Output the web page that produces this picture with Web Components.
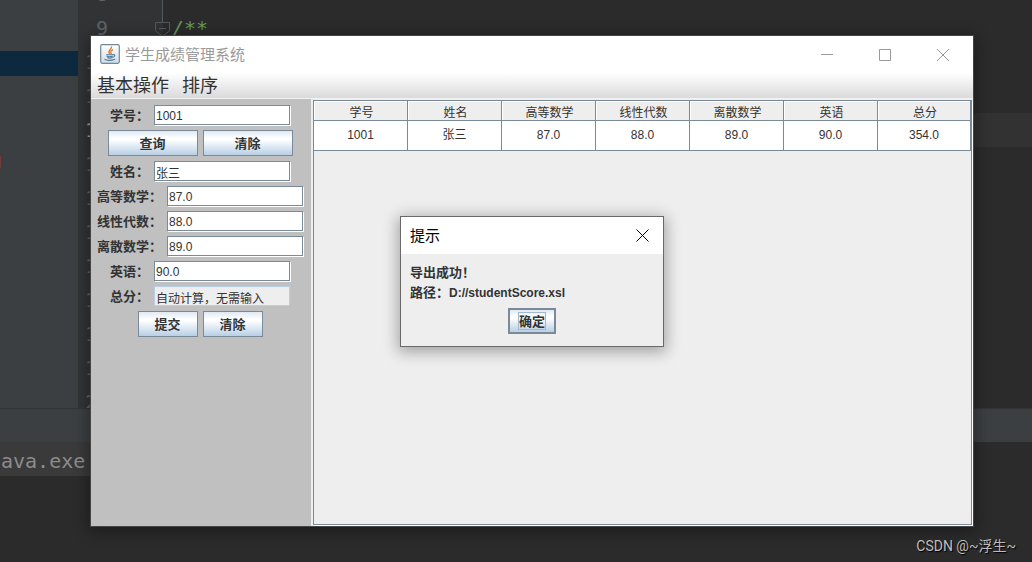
<!DOCTYPE html>
<html lang="zh-CN">
<head>
<meta charset="utf-8">
<meta name="viewport" content="width=device-width, initial-scale=1">
<title>学生成绩管理系统</title>
<style>
  html, body { height: 100%; margin: 0; }
  body {
    overflow: hidden;
    background: #2b2b2b;
    color: #333;
    font: 12px "Liberation Sans", "Noto Sans CJK SC", sans-serif;
    --edge: #7a8a99;
  }
</style>
</head>
<body>
<app-desktop>
  <ide-backdrop slot="backdrop"></ide-backdrop>
  <app-window slot="window" heading="学生成绩管理系统">
    <app-menubar slot="menu"></app-menubar>
    <score-form slot="side"></score-form>
    <score-table></score-table>
    <message-dialog slot="dialog" heading="提示">
      <span>导出成功！</span>
      <span>路径：<small>D://studentScore.xsl</small></span>
    </message-dialog>
  </app-window>
  <span slot="mark">CSDN @~浮生~</span>
</app-desktop>

<script>
const define = (name, html, setup) => {
  const template = document.createElement('template');
  template.innerHTML = html;
  customElements.define(name, class extends HTMLElement {
    constructor() {
      super();
      this.attachShadow({ mode: 'open' }).append(template.content.cloneNode(true));
    }
    connectedCallback() { if (setup) setup(this, this.shadowRoot); }
  });
};

define('app-desktop', `
<style>
  :host { display: block; position: relative; height: 100vh; overflow: hidden; }
  ::slotted([slot=backdrop]) { height: 100%; }
  ::slotted([slot=window]) { position: absolute; inset: 36px 59px 36px 91px; }
  ::slotted([slot=mark]) {
    position: absolute; right: 16px; bottom: 6px;
    font: 14px/20px Roboto, "Noto Sans CJK SC", sans-serif; color: #bdbdbd; text-shadow: 1px 1px 1px #000;
  }
</style>
<slot name="backdrop"></slot><slot name="window"></slot><slot name="mark"></slot>`);

define('ide-backdrop', `
<style>
  :host { display: flex; flex-direction: column; font-family: "DejaVu Sans Mono", monospace; font-size: 20px; }
  .top { flex: 1; display: flex; min-height: 0; overflow: hidden; }
  .project { flex: 0 0 78px; background: #3c3f41; display: flex; flex-direction: column; padding-top: 51px; box-sizing: border-box; }
  .selected { height: 25px; background: #0d293e; }
  .error { width: 1px; height: 12px; margin-top: 80px; background: #743a3a; }
  .code { flex: 1; margin-top: -23px; }
  .line { display: flex; height: 34px; line-height: 34px; color: #606366; }
  .line.current { background: #323232; color: #a4a3a3; }
  .no { box-sizing: border-box; flex: 0 0 85px; padding-left: 18px; background: #313335; }
  .no.tens { padding-left: 7px; }
  .fold { flex: 0 0 9px; }
  .fold svg { display: block; margin-left: -9px; }
  i { color: #629755; }
  .head { flex: 0 0 33px; border-top: 1px solid #323232; background: #3c3f41; }
  .console { flex: 0 0 120px; background: #2b2b2b; color: #8c8c8c; }
  .console p { margin: 0; width: 30%; height: 34px; line-height: 38px; text-indent: 1px; background: #3a3a3a; }
</style>
<div class="top">
  <div class="project"><div class="selected"></div><div class="error"></div></div>
  <div class="code"></div>
</div>
<div class="head"></div>
<div class="console"><p>ava.exe</p></div>`, (host, root) => {
  const foldIcon = '<svg width="17" height="34" viewBox="0 0 17 34" fill="none" stroke="#55585a"><path d="M8.5 0V11M1.5 11.5H15.5V20L8.5 25L1.5 20ZM5 17.5H12"/></svg>';
  const spine = '<svg width="17" height="34" stroke="#55585a"><path d="M8.5 0V34"/></svg>';
  let out = '';
  for (let n = 8; n <= 20; n++) {
    const mark = n === 8 ? spine : n === 9 ? foldIcon : '';
    const tens = n > 9;
    // The window covers the gutter from the second digit on, so only the tens digit is set there.
    out += `<div class="line${n === 12 ? ' current' : ''}"><span class="no${tens ? ' tens' : ''}">${tens ? Math.floor(n / 10) : n}</span><span class="fold">${mark}</span>${n === 9 ? '<i>/**</i>' : ''}</div>`;
  }
  root.querySelector('.code').innerHTML = out;
});

define('app-window', `
<style>
  :host { display: flex; flex-direction: column; background: #eee; box-shadow: 0 0 0 1px #454545, 0 3px 14px 2px rgba(0,0,0,.4); }
  header { display: flex; align-items: center; height: 37px; padding: 0 1px 0 9px; background: #fff; }
  header > svg { margin-bottom: 2px; }
  h1 { flex: 1; margin: 0 0 2px 5px; font-size: 15px; font-weight: 400; color: #999; }
  .ctl { width: 58px; height: 37px; padding: 0; border: 0; background: none; display: grid; place-items: center; }
  .ctl svg { fill: none; stroke: #999; }
  main { flex: 1; display: flex; min-height: 0; }
  ::slotted([slot=side]) { flex: 0 0 220px; }
  ::slotted(score-table) { flex: 1; }
  ::slotted([slot=dialog]) { position: absolute; inset: 0; margin: auto; }
</style>
<header>
  <svg width="20" height="20" viewBox="0 0 20 20">
    <defs><linearGradient id="g" x2="0" y2="1"><stop stop-color="#fff"/><stop offset="1" stop-color="#cfdde8"/></linearGradient></defs>
    <rect x=".7" y=".7" width="18.6" height="18.6" rx="1.5" fill="url(#g)" stroke="#6f889b" stroke-width="1.2"/>
    <g fill="none" stroke-linecap="round">
      <path d="M11.4 3C12 5.3 7.2 6.2 9.5 9.6M12.6 5.8C10.4 7 10.3 7.8 11.2 9.6" stroke="#ea7d25" stroke-width="1.4"/>
      <path d="M6.6 10.8H12.6M7 12.2Q9.8 13.2 12.3 12.2M7.6 13.8Q10 14.6 12 13.8M13 10.7C15.6 10.2 15.2 12.6 13 13.3M5 15.4Q10 17.4 14.8 15.2" stroke="#52799a" stroke-width="1.1"/>
    </g>
  </svg>
  <h1></h1>
  <button class="ctl" aria-label="最小化"><svg width="12" height="12"><path d="M0 5.5H12"/></svg></button>
  <button class="ctl" aria-label="最大化"><svg width="12" height="12"><path d="M.5 .5H11.5V11.5H.5Z"/></svg></button>
  <button class="ctl" aria-label="关闭"><svg width="12" height="12"><path d="M0 0L12 12M12 0L0 12"/></svg></button>
</header>
<slot name="menu"></slot>
<main><slot name="side"></slot><slot></slot></main>
<slot name="dialog"></slot>`, (host, root) => {
  root.querySelector('h1').textContent = host.getAttribute('heading');
});

define('app-menubar', `
<style>
  :host { display: flex; align-items: flex-start; gap: 13px; height: 25px; padding-left: 6px; border-bottom: 1px solid #f2f2f2; background: linear-gradient(#fff, #dadada); }
  button { padding: 0; border: 0; background: none; color: #333; font: 18px/23px "Noto Sans CJK SC", sans-serif; }
</style>
<button>基本操作</button><button>排序</button>`);

define('metal-button', `
<style>
  :host { display: block; }
  button {
    display: block; width: 100%; height: 26px; padding: 0; border: 1px solid var(--edge);
    background: linear-gradient(#dfe9f3, #fff 30%, #fff 36%, #b8cfe5);
    color: #333; font: bold 13px/22px "Noto Sans CJK SC", sans-serif;
  }
  :host([default]) button { border-width: 2px; }
  :host([default]) span { display: inline-block; line-height: 16px; border: 1px solid #a3b8cc; }
</style>
<button><span><slot></slot></span></button>`);

define('metal-field', `
<style>
  :host { display: flex; gap: 5px; height: 20px; justify-content: center; }
  label { font: bold 13px/20px "Noto Sans CJK SC", sans-serif; white-space: nowrap; }
  input {
    box-sizing: border-box; width: 136px; height: 20px; padding: 2px 1px 0 1px; margin: 0; outline: 0;
    border: 1px solid var(--edge); border-radius: 0; background: #fff; color: #333;
    box-shadow: 1px 1px 0 #fff; font: 12px/16px "Liberation Sans", "Noto Sans CJK SC", sans-serif;
  }
  input:read-only { background: #eee; border-color: #b8cfe5; box-shadow: none; }
</style>
<label for="f"></label><input id="f" type="text">`, (host, root) => {
  const input = root.querySelector('input');
  root.querySelector('label').textContent = host.getAttribute('label') + '：';
  input.value = host.getAttribute('value');
  input.readOnly = host.hasAttribute('locked');
});

define('score-form', `
<style>
  :host { display: block; background: #c0c0c0; }
  form { display: flex; flex-direction: column; gap: 5px; padding: 6px 2px 0 0; }
  .row { display: flex; justify-content: center; gap: 5px; }
  .wide metal-button { width: 90px; }
  .narrow metal-button { width: 60px; }
</style>
<form>
  <metal-field label="学号" value="1001"></metal-field>
  <div class="row wide"><metal-button>查询</metal-button><metal-button>清除</metal-button></div>
  <metal-field label="姓名" value="张三"></metal-field>
  <metal-field label="高等数学" value="87.0"></metal-field>
  <metal-field label="线性代数" value="88.0"></metal-field>
  <metal-field label="离散数学" value="89.0"></metal-field>
  <metal-field label="英语" value="90.0"></metal-field>
  <metal-field label="总分" value="自动计算，无需输入" locked></metal-field>
  <div class="row narrow"><metal-button>提交</metal-button><metal-button>清除</metal-button></div>
</form>`);

define('score-table', `
<style>
  :host { display: block; margin: 1px 1px 1px 2px; border: 1px solid var(--edge); box-shadow: 1px 1px 0 #fff; }
  table { width: 100%; table-layout: fixed; border-collapse: separate; border-spacing: 0; }
  th, td { box-sizing: border-box; padding: 0; border: solid var(--edge); border-width: 0 1px 1px 0; text-align: center; font-size: 12px; font-weight: 400; }
  th { height: 20px; padding: 5px 0 0 2px; line-height: 14px; background: #eee; box-shadow: inset 1px 1px 0 #fff; }
  th:last-child { width: 93px; }
  td { height: 30px; line-height: 29px; background: #fff; }
</style>
<table>
  <thead><tr><th>学号</th><th>姓名</th><th>高等数学</th><th>线性代数</th><th>离散数学</th><th>英语</th><th>总分</th></tr></thead>
  <tbody><tr><td>1001</td><td>张三</td><td>87.0</td><td>88.0</td><td>89.0</td><td>90.0</td><td>354.0</td></tr></tbody>
</table>`);

define('message-dialog', `
<style>
  :host { display: flex; flex-direction: column; width: 262px; height: fit-content; border: 1px solid #696969; background: #eee; box-shadow: 0 3px 14px 2px rgba(0,0,0,.32); }
  header { display: flex; align-items: center; justify-content: space-between; height: 37px; padding-left: 9px; background: #fff; }
  h2 { margin: 0 0 2px; font-size: 15px; font-weight: 400; color: #000; }
  .close { width: 42px; height: 37px; padding: 0; border: 0; background: none; display: grid; place-items: center; }
  .body { display: flex; flex-direction: column; padding: 8px 9px 12px; }
  ::slotted(span) { font: bold 13px/20px "Noto Sans CJK SC", sans-serif; }
  metal-button { width: 48px; margin-top: 6px; align-self: center; }
</style>
<header><h2></h2><button class="close" aria-label="关闭"><svg width="13" height="13" fill="none" stroke="#000"><path d="M.5 .5L12.5 12.5M12.5 .5L.5 12.5"/></svg></button></header>
<div class="body"><slot></slot><metal-button default>确定</metal-button></div>`, (host, root) => {
  root.querySelector('h2').textContent = host.getAttribute('heading');
  host.querySelectorAll('small').forEach(el => el.style.font = 'bold 12px "Liberation Sans", sans-serif');
});
</script>
</body>
</html>
